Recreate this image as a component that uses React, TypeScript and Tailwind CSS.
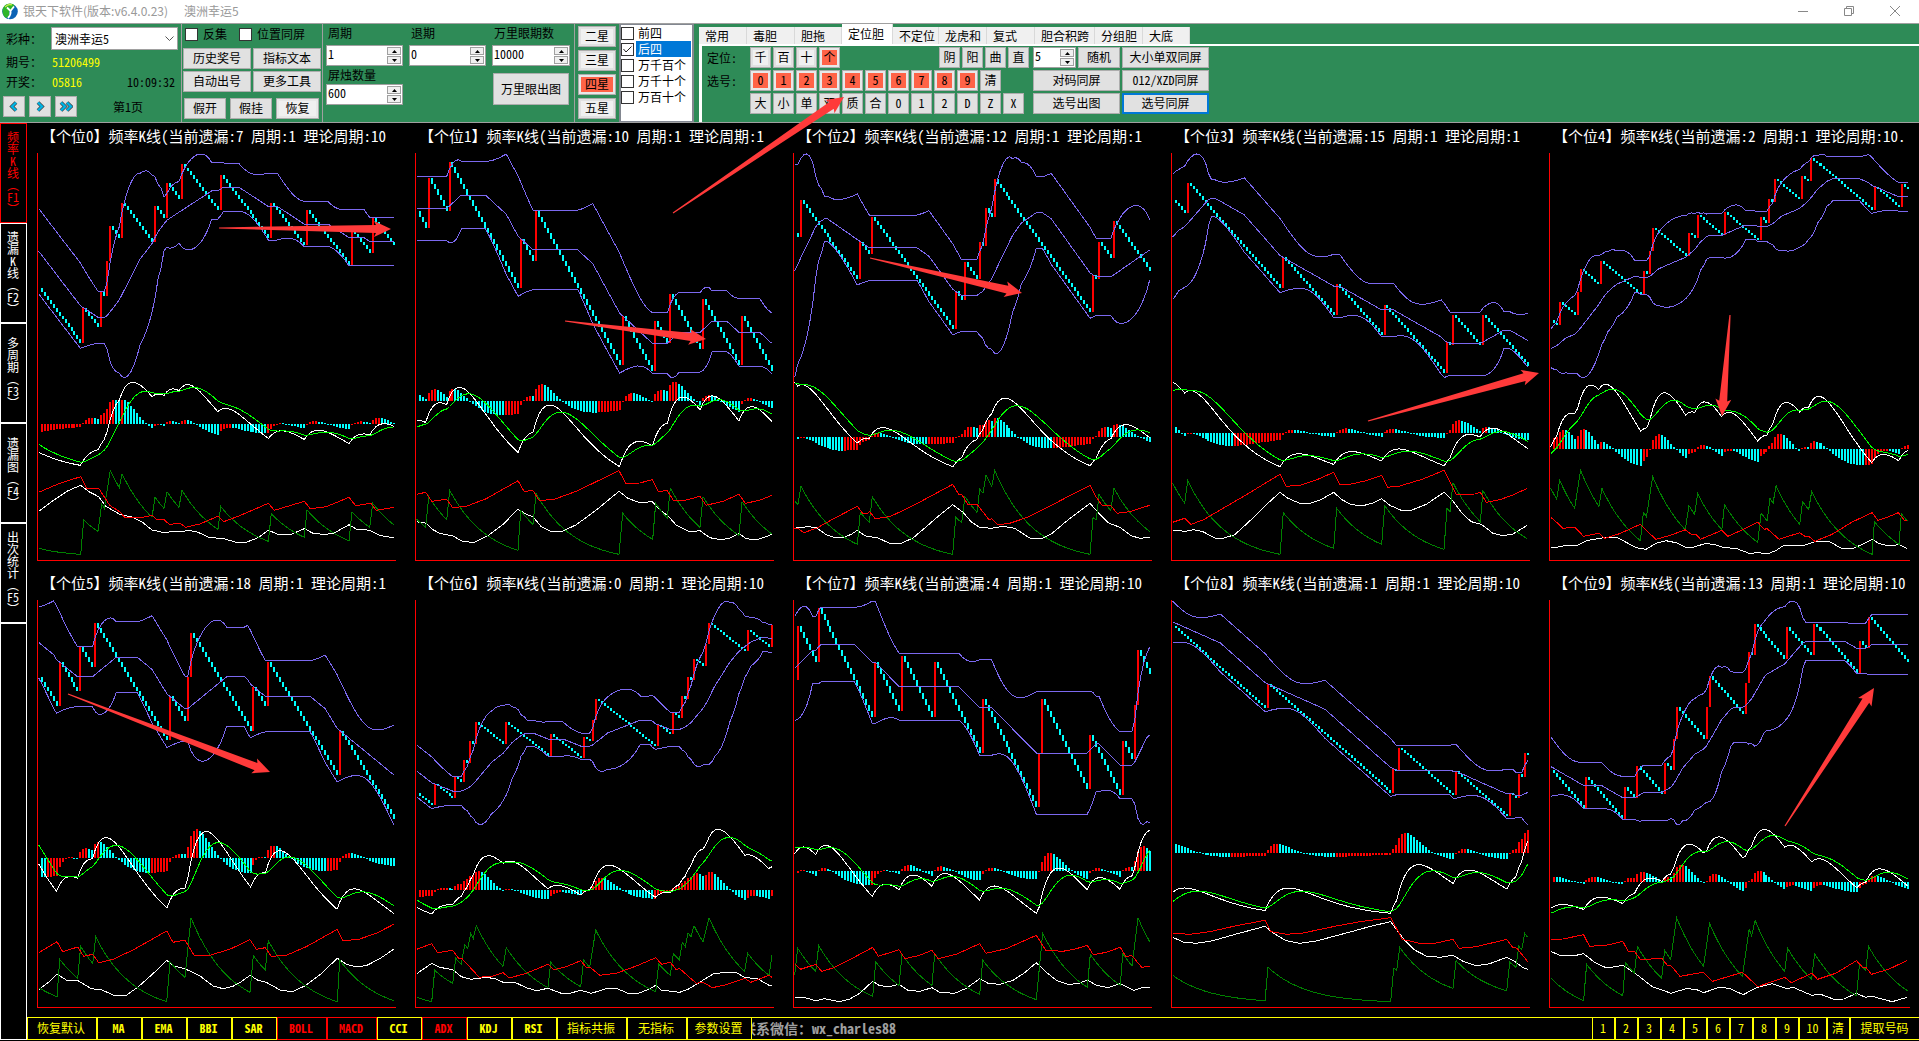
import React from "react";

/* ---------- chart data ---------- */

type Series = number[];

interface ChartSpec {
  title: string;
  /** candle indexes (0-118) of hits; negative ones lie before the visible window */
  hits: number[];
  /** MACD panel: zero line, first DIF, first DEA, anchor candle and its DIF height */
  macd: [number, number, number, number, number];
  /** horizontal and vertical origin of the trend lines below */
  origin: [number, number];
  plus: Series;
  minus: Series;
  adx: Series;
}

const CHARTS: ChartSpec[] = [
  {
    title: "【个位0】频率K线(当前遗漏:7 周期:1 理论周期:10",
    hits: [14, 20, 22, 23, 27, 38, 42, 47, 60, 77, 89, 104, 111],
    macd: [911, 997, 973, 31, 787],
    origin: [112, 99],
    plus: [117,1285,180,1297,243,1303,252,1200,295,1234,306,1153,314,1165,324,1100,332,1051,359,1103,367,1061,457,1192,466,1132,493,1165,502,1115,538,1162,547,1111,655,1228,663,1159,806,1264,815,1181,914,1252,922,1170,1048,1262,1057,1175,1110,1222,1119,1150,1182,1214],
    minus: [117,1117,180,1090,243,1070,261,1105,297,1105,330,1156,360,1175,375,1192,430,1192,457,1186,473,1200,493,1199,509,1213,542,1210,557,1222,600,1212,655,1189,672,1205,720,1187,806,1150,824,1171,914,1144,932,1166,980,1160,1048,1132,1068,1157,1113,1150,1130,1171,1182,1162],
    adx: [117,1174,160,1142,205,1112,243,1096,268,1115,297,1130,318,1159,360,1183,400,1192,430,1208,457,1230,495,1238,520,1234,545,1235,567,1231,595,1237,630,1253,668,1255,710,1267,740,1267,775,1253,806,1231,835,1243,875,1243,914,1226,940,1240,970,1243,1000,1241,1048,1214,1070,1227,1110,1231,1140,1246,1182,1254],
  },
  {
    title: "【个位1】频率K线(当前遗漏:10 周期:1 理论周期:1",
    hits: [-17, -5, 3, 10, 34, 39, 68, 79, 84, 95, 108],
    macd: [843, 901, 922, 67, 1040],
    origin: [16, 99],
    plus: [21,1197,48,1222,57,1130,111,1199,120,1111,325,1291,333,1172,370,1213,379,1120,628,1303,639,1180,729,1258,738,1150,773,1195,782,1105,871,1222,880,1130,988,1246,997,1145,1087,1242],
    minus: [21,1123,48,1117,66,1144,111,1138,129,1163,170,1159,230,1136,325,1082,343,1114,370,1112,388,1141,430,1139,500,1114,628,1052,648,1090,690,1089,728,1079,746,1114,773,1112,791,1141,830,1140,871,1129,889,1156,940,1144,988,1123,1007,1150,1050,1141,1087,1126],
    adx: [21,1205,50,1210,70,1229,90,1240,130,1248,160,1265,195,1267,235,1247,280,1213,325,1168,350,1183,370,1190,395,1220,425,1235,460,1233,500,1214,560,1170,628,1114,655,1135,690,1148,728,1145,750,1170,775,1187,800,1216,840,1235,871,1232,900,1253,935,1259,960,1255,988,1241,1010,1256,1040,1259,1065,1252,1087,1243],
  },
  {
    title: "【个位2】频率K线(当前遗漏:12 周期:1 理论周期:1",
    hits: [-19, -13, -12, -10, -9, 1, 21, 25, 53, 56, 61, 63, 66, 99, 101, 106],
    macd: [951, 787, 790, 52, 1040],
    origin: [40, 99],
    plus: [45,1144,55,1153,64,1099,233,1273,242,1177,269,1207,278,1130,519,1303,528,1192,546,1208,556,1130,592,1177,600,1108,610,1120,619,1065,636,1100,645,1051,931,1303,940,1193,950,1199,958,1123,993,1172,1003,1105,1110,1234],
    minus: [42,1225,55,1225,72,1238,110,1225,170,1192,233,1159,250,1181,264,1181,269,1174,287,1196,330,1190,400,1157,519,1093,537,1123,546,1123,564,1153,592,1153,628,1199,636,1196,654,1214,690,1210,740,1193,830,1148,931,1096,949,1130,967,1156,993,1156,1012,1180,1050,1175,1110,1156],
    adx: [42,1225,85,1220,110,1223,140,1244,165,1253,190,1253,215,1243,233,1231,255,1247,295,1254,330,1270,365,1270,400,1254,440,1220,480,1185,519,1154,550,1177,575,1206,600,1222,635,1225,670,1219,705,1225,750,1254,785,1256,815,1242,860,1204,931,1150,960,1183,985,1208,1020,1222,1055,1247,1080,1255,1110,1252],
  },
  {
    title: "【个位3】频率K线(当前遗漏:15 周期:1 理论周期:1",
    hits: [-18, -8, -7, -6, 4, 36, 54, 70, 91, 93, 103],
    macd: [939, 787, 813, 35, 1040],
    origin: [34, 99],
    plus: [39,1090,75,1150,84,1081,361,1303,371,1178,522,1285,531,1165,666,1273,675,1157,853,1288,862,1165,871,1175,880,1088,962,1205,970,1112,1103,1256],
    minus: [39,1207,75,1195,94,1213,130,1200,180,1171,250,1130,361,1063,379,1099,420,1096,470,1080,522,1057,540,1093,570,1093,620,1082,666,1066,684,1102,720,1098,790,1077,853,1051,890,1123,945,1122,962,1117,980,1147,1020,1139,1060,1125,1103,1105],
    adx: [39,1231,78,1234,103,1229,130,1235,165,1254,190,1255,225,1244,280,1194,320,1154,361,1117,385,1135,420,1150,450,1150,480,1141,522,1117,545,1138,575,1154,610,1157,640,1149,666,1136,690,1156,725,1171,755,1171,800,1153,853,1117,880,1144,910,1183,935,1205,965,1213,1000,1240,1030,1247,1060,1242,1103,1216],
  },
  {
    title: "【个位4】频率K线(当前遗漏:2 周期:1 理论周期:10.",
    hits: [-15, -3, -1, 2, 8, 9, 16, 30, 32, 33, 45, 48, 57, 69, 72, 74, 83, 86, 107, 116],
    macd: [987, 980, 1001, 88, 829],
    origin: [28, 99],
    plus: [33,1105,51,1138,60,1081,105,1165,123,1051,178,1160,187,1105,303,1262,312,1177,321,1190,340,1070,438,1229,449,1157,466,1183,475,1121,548,1229,556,1154,656,1267,666,1180,684,1202,693,1135,702,1150,711,1097,782,1213,791,1145,809,1169,818,1115,1000,1303,1007,1205,1081,1273,1088,1181,1106,1203],
    minus: [33,1192,51,1207,70,1225,105,1222,132,1249,178,1240,196,1255,240,1241,303,1213,349,1258,390,1247,438,1229,457,1244,470,1243,484,1258,548,1231,566,1249,600,1234,656,1207,675,1228,684,1226,720,1258,782,1238,800,1250,809,1249,828,1264,880,1243,940,1206,1000,1178,1017,1201,1050,1190,1079,1178,1097,1201,1106,1201],
    adx: [33,1282,55,1281,80,1276,110,1278,140,1262,200,1252,235,1253,262,1268,290,1283,320,1288,350,1270,380,1262,410,1268,440,1282,465,1281,500,1270,530,1275,555,1283,590,1285,630,1300,660,1298,685,1302,710,1292,735,1276,790,1278,825,1266,870,1264,910,1286,940,1287,970,1273,1000,1258,1020,1270,1045,1277,1082,1274,1106,1286],
  },
  {
    title: "【个位5】频率K线(当前遗漏:18 周期:1 理论周期:1",
    hits: [-15, 6, 13, 18, 43, 49, 50, 71, 76, 100],
    macd: [894, 912, 855, 118, 1060],
    origin: [112, 120],
    plus: [117,1283,172,1310,180,1198,234,1255,243,1159,279,1210,288,1130,501,1325,511,1205,556,1252,574,1073,751,1297,761,1187,797,1230,806,1142,1013,1325,1020,1200,1182,1322],
    minus: [117,1178,172,1145,189,1175,234,1161,252,1189,279,1183,297,1208,340,1198,400,1170,501,1113,520,1147,556,1140,583,1186,630,1186,690,1168,751,1139,770,1168,797,1163,815,1189,860,1186,920,1160,1013,1108,1030,1143,1080,1137,1130,1120,1182,1093],
    adx: [117,1289,145,1268,172,1243,200,1260,235,1262,275,1286,305,1289,345,1307,380,1306,415,1281,460,1241,501,1201,525,1219,555,1226,600,1247,640,1278,670,1286,700,1279,725,1265,751,1246,775,1261,800,1267,845,1292,880,1294,915,1278,960,1245,1013,1195,1040,1213,1070,1220,1100,1217,1140,1196,1182,1168],
  },
  {
    title: "【个位6】频率K线(当前遗漏:0 周期:1 理论周期:10",
    hits: [5, 12, 15, 17, 19, 29, 44, 55, 58, 59, 80, 85, 88, 90, 92, 96, 97, 110, 118],
    macd: [990, 1042, 1020, 100, 808],
    origin: [16, 120],
    plus: [21,1312,66,1325,75,1231,129,1270,138,1195,155,1213,165,1154,174,1165,183,1120,191,1135,200,1097,280,1219,290,1163,415,1283,423,1207,513,1280,522,1201,540,1222,558,1110,738,1295,747,1212,782,1246,791,1181,809,1200,818,1147,827,1160,835,1118,844,1130,853,1097,880,1145,898,1073,1005,1234,1014,1180,1078,1246,1087,1186],
    minus: [21,1168,66,1151,84,1178,129,1171,147,1195,156,1195,209,1252,250,1248,280,1238,299,1254,350,1240,415,1213,433,1229,470,1220,513,1202,531,1223,543,1223,570,1246,620,1240,680,1218,738,1193,756,1213,782,1207,800,1229,809,1225,860,1270,880,1267,908,1283,950,1274,1005,1255,1023,1267,1078,1246,1087,1252],
    adx: [21,1241,66,1210,90,1222,129,1229,155,1250,185,1258,230,1252,260,1257,280,1267,320,1269,350,1283,380,1292,415,1285,455,1300,480,1300,513,1291,545,1300,590,1286,625,1287,655,1300,685,1300,715,1289,738,1276,755,1290,810,1297,835,1288,870,1267,910,1242,945,1237,980,1238,1005,1252,1045,1257,1080,1277,1087,1277],
  },
  {
    title: "【个位7】频率K线(当前遗漏:4 周期:1 理论周期:10",
    hits: [-14, -11, 0, 7, 26, 35, 46, 62, 81, 82, 98, 109, 113, 114],
    macd: [933, 881, 861, 80, 1060],
    origin: [40, 120],
    plus: [45,1246,54,1165,108,1234,117,1157,279,1309,288,1205,358,1276,367,1183,457,1276,465,1181,600,1303,609,1200,770,1319,789,1120,923,1282,932,1183,1022,1276,1029,1181,1057,1217,1075,1073,1110,1145],
    minus: [45,1211,63,1228,108,1213,126,1234,160,1224,210,1199,279,1162,296,1189,358,1169,376,1196,420,1186,457,1171,475,1196,530,1183,600,1151,619,1180,680,1166,770,1126,798,1171,850,1174,890,1166,923,1156,941,1184,980,1177,1022,1162,1038,1189,1057,1187,1086,1222,1110,1219],
    adx: [45,1312,80,1314,108,1322,135,1316,180,1325,210,1317,240,1300,279,1264,300,1277,330,1280,358,1273,385,1291,420,1294,457,1283,480,1297,525,1300,560,1285,600,1256,625,1270,660,1273,700,1261,735,1238,770,1208,800,1237,830,1261,865,1273,895,1271,923,1260,950,1276,985,1283,1022,1271,1062,1291,1085,1284,1110,1282],
  },
  {
    title: "【个位8】频率K线(当前遗漏:1 周期:1 理论周期:10",
    hits: [-4, 31, 73, 75, 94, 112, 115, 117],
    macd: [879, 997, 1025, 72, 1060],
    origin: [34, 120],
    plus: [39,1246,316,1322,325,1222,693,1325,702,1225,711,1231,720,1162,880,1285,889,1202,1041,1292,1050,1207,1069,1222,1077,1159,1086,1169,1095,1120,1104,1132],
    minus: [39,1120,90,1123,150,1115,230,1097,316,1081,334,1115,380,1123,430,1119,530,1098,600,1085,693,1073,728,1138,780,1150,830,1149,880,1138,898,1165,950,1160,1041,1138,1059,1162,1072,1165,1104,1205],
    adx: [39,1132,70,1146,110,1150,160,1142,230,1122,316,1099,345,1122,380,1142,420,1150,470,1143,560,1119,640,1097,693,1085,730,1135,765,1170,800,1188,840,1192,880,1186,910,1204,950,1217,990,1211,1041,1192,1065,1204,1090,1223,1104,1228],
  },
  {
    title: "【个位9】频率K线(当前遗漏:13 周期:1 理论周期:10",
    hits: [-3, 11, 24, 28, 37, 40, 41, 51, 52, 64, 65, 67, 78, 87, 102, 105],
    macd: [966, 1045, 1060, 70, 808],
    origin: [28, 120],
    plus: [33,1254,132,1322,141,1213,250,1307,258,1207,285,1240,294,1159,367,1255,376,1171,394,1199,412,1073,493,1219,511,1090,610,1249,630,1108,638,1127,648,1081,737,1234,746,1165,818,1258,827,1181,953,1307,962,1212,981,1231,989,1159,1106,1292],
    minus: [33,1138,70,1137,132,1124,150,1159,200,1156,250,1144,267,1175,286,1175,304,1199,367,1195,385,1217,394,1216,422,1249,493,1237,520,1264,610,1237,656,1280,737,1252,757,1268,818,1240,836,1258,890,1240,953,1202,972,1223,981,1222,998,1243,1050,1228,1106,1201],
    adx: [33,1174,60,1186,100,1188,132,1181,165,1207,195,1221,220,1221,250,1216,295,1246,340,1281,370,1291,395,1300,440,1286,470,1288,493,1298,540,1282,570,1285,612,1304,655,1282,700,1271,740,1285,765,1283,818,1306,845,1303,885,1318,915,1317,953,1300,980,1312,1000,1309,1060,1325,1106,1312],
  },
];

const COUNT = 119;
const PAST = 20;
const PLOT_W = 359;
const PLOT_H = 408;

const candleX = (k: number) => (14 + 8.95 * k) / 3;

function buildChart(spec: ChartSpec, wide: boolean) {
  const hit = new Set(spec.hits);
  const step = (k: number) => (hit.has(k) ? 9 : -1);
  const close: Record<number, number> = { [-1]: 0 };
  for (let k = -1; k > -PAST; k--) close[k - 1] = close[k] - step(k);
  for (let k = 0; k < COUNT; k++) close[k] = close[k - 1] + step(k);

  // Bollinger bands, 20 candles wide
  const mid: number[] = [];
  const dev: number[] = [];
  for (let k = -1; k < COUNT; k++) {
    let sum = 0;
    for (let j = 0; j < 20; j++) sum += close[k - j];
    const mean = sum / 20;
    let sq = 0;
    for (let j = 0; j < 20; j++) sq += (close[k - j] - mean) ** 2;
    mid.push(mean);
    dev.push(1.9 * Math.sqrt(sq / 20));
  }
  const top = Math.max(...mid.map((m, i) => m + dev[i]));
  const low = Math.min(...mid.map((m, i) => m - dev[i]));
  const priceY = (v: number) => 1 + ((top - v) / (top - low)) * 223.5;
  const band = (sign: number) =>
    mid.map((m, i) => `${candleX(i - 1).toFixed(1)},${priceY(m + sign * dev[i]).toFixed(1)}`).join(" ");

  const candles = [];
  for (let k = 0; k < COUNT; k++) {
    const up = hit.has(k);
    const y1 = Math.round(priceY(Math.max(close[k], close[k - 1])));
    const y2 = Math.round(priceY(Math.min(close[k], close[k - 1])));
    candles.push({ x: Math.round(candleX(k)) - 1, y: y1, h: Math.max(2, y2 - y1), up });
  }

  // MACD(12, 26, 9)
  const [base, dif0, dea0, anchor, anchorY] = spec.macd;
  let fast = close[-PAST];
  for (let k = -PAST + 1; k < 0; k++) fast += (close[k] - fast) * (2 / 13);
  let scale = 25;
  let dif: number[] = [];
  let dea: number[] = [];
  for (let round = 0; round < 12; round++) {
    let e12 = fast;
    let e26 = fast - (base - dif0) / scale;
    let signal = (base - dea0) / scale;
    dif = [e12 - e26];
    dea = [signal];
    for (let k = 0; k < COUNT; k++) {
      e12 += (close[k] - e12) * (2 / 13);
      e26 += (close[k] - e26) * (2 / 27);
      signal += (e12 - e26 - signal) * 0.2;
      dif.push(e12 - e26);
      dea.push(signal);
    }
    scale = (base - anchorY) / dif[anchor + 1];
  }
  const macdY = (v: number) => (base - spec.origin[1] - v * scale) / 3;
  const zero = Math.round(macdY(0));
  const line = (vals: number[]) =>
    vals.map((v, i) => `${candleX(i - 1).toFixed(1)},${macdY(v).toFixed(1)}`).join(" ");
  const bars = [];
  for (let k = 0; k < COUNT; k++) {
    const v = dif[k + 1] - dea[k + 1];
    const before = dif[k] - dea[k];
    const h = Math.max(1, Math.round((Math.abs(v) * scale) / 3));
    bars.push({ x: Math.round(candleX(k)) - 1, y: v > 0 ? zero - h : zero, h, up: v > before });
  }

  // directional movement lines
  const stretch = wide ? 359 / 362 : 1;
  const local = (x: number, y: number) =>
    `${(((x - spec.origin[0]) / 3) * stretch).toFixed(1)},${((y - spec.origin[1]) / 3).toFixed(1)}`;
  const path = (pts: Series, decay: boolean) => {
    const out: string[] = [];
    for (let i = 0; i < pts.length; i += 2) {
      const [x, y, nx, ny] = [pts[i], pts[i + 1], pts[i + 2], pts[i + 3]];
      out.push(local(x, y));
      if (decay && ny > y && nx - x > 20) {
        const n = Math.round((nx - x) / 9);
        const b = (y - ny) / (1 - 0.926 ** n);
        for (let t = 1; t < n; t++) out.push(local(x + ((nx - x) * t) / n, y + b * (0.926 ** t - 1)));
      }
    }
    return out.join(" ");
  };

  return {
    bands: [band(1), band(0), band(-1)],
    candles,
    bars,
    dif: line(dif),
    dea: line(dea),
    plus: path(spec.plus, true),
    minus: path(spec.minus, false),
    adx: path(spec.adx, false),
  };
}

const BUILT = CHARTS.map((c, i) => ({ title: c.title, ...buildChart(c, i % 5 === 4) }));

function Chart({ data }: { data: (typeof BUILT)[number] }) {
  return (
    <section className="flex min-h-0 min-w-0 flex-col pb-[9px] pl-[10px]">
      <h2 className="h-[30px] shrink-0 pt-px pl-[4px] text-[15px] leading-[24px] font-normal whitespace-pre text-white">
        {data.title}
      </h2>
      <div className="flex min-h-0 flex-1 pr-[9px]">
        <svg
          className="block h-full w-full min-w-0"
          viewBox={`0 0 ${PLOT_W} ${PLOT_H}`}
          preserveAspectRatio="none"
          shapeRendering="crispEdges"
          fill="none"
          role="img"
          aria-label={data.title}
        >
          {data.candles.map((c, i) => (
            <rect key={i} x={c.x} y={c.y} width={2} height={c.h} fill={c.up ? "#ff0000" : "#00ffff"} />
          ))}
          {data.bands.map((b, i) => (
            <polyline key={i} points={b} stroke="#7b68ee" />
          ))}
          {data.bars.map((c, i) => (
            <rect key={i} x={c.x} y={c.y} width={2} height={c.h} fill={c.up ? "#ff0000" : "#00ffff"} />
          ))}
          <polyline points={data.dif} stroke="#ffffff" />
          <polyline points={data.dea} stroke="#00ff00" />
          <polyline points={data.adx} stroke="#ffffff" />
          <polyline points={data.plus} stroke="#008000" />
          <polyline points={data.minus} stroke="#ff0000" />
          <path d={`M0.5 0V${PLOT_H - 0.5}H${PLOT_W}`} stroke="#ff0000" />
        </svg>
      </div>
    </section>
  );
}

/* ---------- small controls ---------- */

function Btn({ children, className = "", label }: { children: React.ReactNode; className?: string; label?: string }) {
  return (
    <button
      type="button"
      aria-label={label}
      className={`flex h-[21px] items-center justify-center border border-[#adadad] bg-[#e1e1e1] pb-px leading-none whitespace-nowrap text-black ${className}`}
    >
      {children}
    </button>
  );
}

function Key({ children, on = false, light = false }: { children: string; on?: boolean; light?: boolean }) {
  const tone = on
    ? "bg-[#ff6347] shadow-[inset_0_0_0_2px_#e8e8e8]"
    : light
      ? "bg-[#f0f0f0] shadow-[inset_0_0_0_2px_#e1e1e1]"
      : "bg-[#e1e1e1]";
  return (
    <button
      type="button"
      className={`flex h-[21px] w-[21px] items-center justify-center border border-[#adadad] pb-px leading-none text-black ${tone}`}
    >
      {children}
    </button>
  );
}

function Spin({ id, value, label, className = "" }: { id: string; value: string; label: string; className?: string }) {
  return (
    <div className={`flex h-[21px] border border-[#a0a0a0] bg-white ${className}`}>
      <input
        id={id}
        aria-label={label}
        defaultValue={value}
        className="min-w-0 flex-1 bg-white px-px pb-[4px] leading-none text-black outline-none"
      />
      <div className="flex w-[16px] flex-col gap-px p-px">
        <button type="button" aria-label={`${label}+`} className="flex flex-1 items-center justify-center border border-[#a0a0a0] bg-[#f0f0f0]">
          <svg width="5" height="3" viewBox="0 0 5 3"><path d="M0 3L2.500 0L5 3Z" /></svg>
        </button>
        <button type="button" aria-label={`${label}-`} className="flex flex-1 items-center justify-center border border-[#a0a0a0] bg-[#f0f0f0]">
          <svg width="5" height="3" viewBox="0 0 5 3"><path d="M0 0L2.500 3L5 0Z" /></svg>
        </button>
      </div>
    </div>
  );
}

const CHECK =
  "h-[13px] w-[13px] shrink-0 appearance-none border border-[#333] bg-white";

function Chevrons({ d }: { d: string }) {
  return (
    <svg width="14" height="11" viewBox="0 0 14 11" fill="none" stroke="#444" strokeWidth="3.800">
      <path d={d} />
      <path d={d} stroke="#00b4e6" strokeWidth="2.400" />
    </svg>
  );
}

/* ---------- header ---------- */

function TitleBar() {
  return (
    <div className="flex h-[23px] items-center bg-white pb-px text-[12px] text-[#999]">
      <svg className="ml-[2px]" width="16" height="17" viewBox="0 0 16 17">
        <circle cx="8" cy="8.500" r="7.800" fill="#0b62b5" />
        <path d="M2 3.500C5-.5 11 0 12.500 2.500C11 6 9 8 7 8C8 11 7 14 4 15C-.5 12 0 6 2 3.500Z" fill="#2fb52a" />
        <path d="M5 4.500L8.500 8L12 3.500M8.500 8C9 11 8 13 6 15" fill="none" stroke="#fff" strokeWidth="1.800" />
        <path d="M3 4C5 2 8 1 10 2" fill="none" stroke="#c8ee4a" strokeWidth="1.300" />
      </svg>
      <h1 className="ml-[5px] flex gap-[16px] font-['Noto_Sans_CJK_SC',sans-serif] font-normal whitespace-nowrap">
        <span>银天下软件(版本:v6.4.0.23)</span>
        <span>澳洲幸运5</span>
      </h1>
      <div className="ml-auto flex pr-px">
        <button type="button" aria-label="最小化" className="flex h-[20px] w-[46px] items-center justify-center">
          <svg width="10" height="10" viewBox="0 0 10 10" stroke="#888"><path d="M0 5.500H10" /></svg>
        </button>
        <button type="button" aria-label="还原" className="flex h-[20px] w-[46px] items-center justify-center">
          <svg width="10" height="10" viewBox="0 0 10 10" fill="none" stroke="#888"><path d="M.5 2.500H7.500V9.500H.5ZM2.500 2.500V.5H9.500V7.500H7.500" /></svg>
        </button>
        <button type="button" aria-label="关闭" className="flex h-[20px] w-[46px] items-center justify-center">
          <svg width="10" height="10" viewBox="0 0 10 10" stroke="#888"><path d="M0 0L10 10M10 0L0 10" /></svg>
        </button>
      </div>
    </div>
  );
}

function DrawInfo() {
  return (
    <div className="flex w-[182px] shrink-0 flex-col border-r border-[#a0a0a0] pl-[3px]">
      <div className="flex pt-[3px] pl-[3px]">
        <label htmlFor="lottery" className="w-[45px] leading-[23px]">彩种：</label>
        <div className="relative">
          <select id="lottery" className="h-[23px] w-[127px] appearance-none border border-[#a0a0a0] bg-white pl-[3px] text-black">
            <option>澳洲幸运5</option>
          </select>
          <svg className="pointer-events-none absolute top-[9px] right-[4px]" width="9" height="6" viewBox="0 0 9 6" fill="none" stroke="#555"><path d="M.5.5L4.500 4.500L8.500.5" /></svg>
        </div>
      </div>
      <div className="mt-[2px] flex h-[20px] items-center pl-[3px]">
        <span className="w-[46px]">期号：</span>
        <span className="text-[#ffff00]">51206499</span>
      </div>
      <div className="flex h-[19px] items-center pl-[3px]">
        <span className="w-[46px]">开奖：</span>
        <span className="text-[#ffff00]">05816</span>
        <span className="ml-auto pr-[6px]">10:09:32</span>
      </div>
      <div className="mt-[5px] flex items-center gap-[4px]">
        <Btn className="w-[22px]" label="上一页"><Chevrons d="M9 1.500L5 5.500L9 9.500" /></Btn>
        <Btn className="w-[22px]" label="下一页"><Chevrons d="M5 1.500L9 5.500L5 9.500" /></Btn>
        <Btn className="w-[22px]" label="末页"><Chevrons d="M2 1.500L6 5.500L2 9.500M8 1.500L12 5.500L8 9.500" /></Btn>
        <span className="ml-[32px]">第1页</span>
      </div>
    </div>
  );
}

function Tools() {
  return (
    <div className="flex w-[141px] shrink-0 flex-col border-r border-[#a0a0a0] pt-[2px] pl-px">
      <div className="flex h-[16px] items-center pl-[2px]">
        <label className="flex w-[54px] items-center gap-[5px]"><input type="checkbox" className={CHECK} />反集</label>
        <label className="flex items-center gap-[5px]"><input type="checkbox" className={CHECK} />位置同屏</label>
      </div>
      <div className="mt-[6px] grid grid-cols-[68px_68px] gap-[2px]">
        <Btn>历史奖号</Btn>
        <Btn>指标文本</Btn>
        <Btn>自动出号</Btn>
        <Btn>更多工具</Btn>
      </div>
      <div className="mt-[6px] flex gap-[4px] pl-px">
        <Btn className="w-[42px]">假开</Btn>
        <Btn className="w-[42px]">假挂</Btn>
        <Btn className="w-[43px] bg-[#f0f0f0] shadow-[inset_0_0_0_2px_#e8e8e8]">恢复</Btn>
      </div>
    </div>
  );
}

function Periods() {
  return (
    <div className="w-[252px] shrink-0 border-r border-[#a0a0a0] pl-[3px]">
      <div className="grid grid-cols-[77px_77px_78px] gap-x-[6px]">
        <label htmlFor="p1" className="pl-[2px] leading-[18px]">周期</label>
        <label htmlFor="p2" className="pl-[2px] leading-[18px]">退期</label>
        <label htmlFor="p3" className="pl-[2px] leading-[18px]">万里眼期数</label>
        <Spin id="p1" value="1" label="周期" className="mt-[3px]" />
        <Spin id="p2" value="0" label="退期" className="mt-[3px]" />
        <Spin id="p3" value="10000" label="万里眼期数" className="mt-[3px]" />
      </div>
      <div className="flex">
        <div className="w-[167px]">
          <label htmlFor="p4" className="block pl-[2px] leading-[18px]">屏烛数量</label>
          <Spin id="p4" value="600" label="屏烛数量" className="w-[77px]" />
        </div>
        <Btn className="mt-[7px] h-[32px] w-[76px]">万里眼出图</Btn>
      </div>
    </div>
  );
}

const STARS = ["二星", "三星", "四星", "五星"];
const GROUPS = ["前四", "后四", "万千百个", "万千十个", "万百十个"];
const TABS: [string, string][] = [
  ["常用", "w-[48px]"],
  ["毒胆", "w-[48px]"],
  ["胆拖", "w-[47px]"],
  ["定位胆", "w-[51px]"],
  ["不定位", "w-[46px]"],
  ["龙虎和", "w-[48px]"],
  ["复式", "w-[48px]"],
  ["胆合积跨", "w-[60px]"],
  ["分组胆", "w-[48px]"],
  ["大底", "w-[47px]"],
];

function Groups() {
  return (
    <>
      <div className="flex shrink-0 flex-col gap-[3px] px-[3px] pt-[2px]">
        {STARS.map((s, i) => (
          <button
            key={s}
            type="button"
            className={`h-[21px] w-[38px] border border-[#adadad] pb-px leading-none text-black ${
              i === 2 ? "bg-[#ff6347] shadow-[inset_0_0_0_2px_#e8e8e8]" : "bg-[#f0f0f0] shadow-[inset_0_0_0_2px_#e1e1e1]"
            }`}
          >
            {s}
          </button>
        ))}
      </div>
      <div className="w-[75px] shrink-0 border-x-2 border-y border-[#828790] bg-white pr-px">
        {GROUPS.map((g, i) => (
          <label key={g} className="flex h-[16px] items-center gap-[2px]">
            <span className="relative flex">
              <input type="checkbox" defaultChecked={i === 1} className={CHECK} />
              {i === 1 && (
                <svg className="pointer-events-none absolute top-[3px] left-[2px]" width="9" height="7" viewBox="0 0 9 7" fill="none" stroke="#222"><path d="M.5 3L3 6L8.500.5" /></svg>
              )}
            </span>
            <span className={`flex-1 pl-[2px] leading-[16px] whitespace-nowrap ${i === 1 ? "bg-[#0078d7] text-white" : "text-black"}`}>{g}</span>
          </label>
        ))}
      </div>
    </>
  );
}

function Picker() {
  return (
    <div className="flex min-w-0 flex-1 flex-col pl-[5px]">
      <div role="tablist" className="flex h-[20px] items-end">
        {TABS.map(([t, w], i) => (
          <button
            key={t}
            type="button"
            role="tab"
            aria-selected={i === 3}
            className={`flex shrink-0 items-center border-r border-[#d9d9d9] pl-[6px] whitespace-nowrap text-black ${w} ${
              i === 3 ? "h-[20px] bg-white pb-px" : "h-[17px] bg-[#f0f0f0]"
            }`}
          >
            {t}
          </button>
        ))}
      </div>
      <div className="flex flex-1 border-t-2 border-l-3 border-white pl-[5px]">
        <div className="flex w-[326px] flex-col gap-[2px] pt-px">
          <div className="flex items-center gap-[2px] pr-[4px]">
            <span className="w-[41px]">定位:</span>
            {["千", "百", "十"].map((t) => <Key key={t} light>{t}</Key>)}
            <Key on>个</Key>
            <span className="flex-1" />
            {["阴", "阳", "曲", "直"].map((t) => <Key key={t}>{t}</Key>)}
          </div>
          <div className="flex items-center gap-[2px]">
            <span className="w-[41px]">选号:</span>
            {"0123456789".split("").map((t) => <Key key={t} on>{t}</Key>)}
            <Key>清</Key>
          </div>
          <div className="flex gap-[2px] pl-[43px]">
            {["大", "小", "单", "双", "质", "合", "0", "1", "2", "D", "Z", "X"].map((t) => <Key key={t}>{t}</Key>)}
          </div>
        </div>
        <div className="grid grid-cols-[87px_87px] content-start gap-[2px] pt-px">
          <div className="flex gap-[2px]">
            <Spin id="rand" value="5" label="随机数" className="w-[43px]" />
            <Btn className="flex-1">随机</Btn>
          </div>
          <Btn>大小单双同屏</Btn>
          <Btn>对码同屏</Btn>
          <Btn>012/XZD同屏</Btn>
          <Btn>选号出图</Btn>
          <button type="button" className="flex h-[21px] items-center justify-center border-2 border-[#0078d7] bg-[#e1e1e1] pb-px leading-none text-black">选号同屏</button>
        </div>
      </div>
    </div>
  );
}

/* ---------- side tabs and bottom bar ---------- */

const SIDE = [
  ["频", "率", "K", "线", "︵", "F1", "︶"],
  ["遗", "漏", "K", "线", "︵", "F2", "︶"],
  ["多", "周", "期", "︵", "F3", "︶"],
  ["遗", "漏", "图", "︵", "F4", "︶"],
  ["出", "次", "统", "计", "︵", "F5", "︶"],
];

function SideTabs() {
  return (
    <nav className="flex w-[27px] shrink-0 flex-col border-b border-white">
      {SIDE.map((chars, i) => (
        <button
          key={i}
          type="button"
          className={`flex h-[100px] w-full flex-col items-center justify-center border pr-px text-[12px] leading-[12px] ${
            i === 0 ? "border-[#ff0000] text-[#ff0000]" : "border-white text-white"
          }`}
        >
          {chars.map((c, j) => <span key={j} className="block h-[12px]">{c}</span>)}
        </button>
      ))}
      <div className="flex-1 border border-b-0 border-white" />
    </nav>
  );
}

const INDICATORS: [string, string, boolean][] = [
  ["恢复默认", "w-[70px]", false],
  ["MA", "w-[45px] font-bold", false],
  ["EMA", "w-[45px] font-bold", false],
  ["BBI", "w-[45px] font-bold", false],
  ["SAR", "w-[45px] font-bold", false],
  ["BOLL", "w-[50px] font-bold", true],
  ["MACD", "w-[50px] font-bold", true],
  ["CCI", "w-[45px] font-bold", false],
  ["ADX", "w-[45px] font-bold", true],
  ["KDJ", "w-[45px] font-bold", false],
  ["RSI", "w-[45px] font-bold", false],
  ["指标共振", "w-[70px]", false],
  ["无指标", "w-[60px]", false],
  ["参数设置", "w-[65px]", false],
];

function BottomBar() {
  return (
    <footer className="flex h-[23px] shrink-0 text-[12px] text-[#ffff00]">
      {INDICATORS.map(([t, w, on]) => (
        <button
          key={t}
          type="button"
          className={`flex shrink-0 items-center justify-center border pr-[2px] pb-[2px] whitespace-nowrap ${w} ${on ? "border-[#ff0000] text-[#ff0000]" : "border-[#ffff00]"}`}
        >
          {t}
        </button>
      ))}
      <div className="flex min-w-0 flex-1 items-center overflow-hidden border-y border-[#ffff00]">
        <span className="-ml-[10px] pb-[2px] text-[14px] leading-none font-bold whitespace-nowrap text-[#a0a0a0]">联系微信：wx_charles88</span>
      </div>
      {["1", "2", "3", "4", "5", "6", "7", "8", "9"].map((n) => (
        <button key={n} type="button" className="flex w-[23px] shrink-0 items-center justify-center border border-[#ffff00] pr-px pb-[2px]">{n}</button>
      ))}
      <button type="button" className="flex w-[28px] shrink-0 items-center justify-center border border-[#ffff00] pr-px pb-[2px]">10</button>
      <button type="button" className="flex w-[23px] shrink-0 items-center justify-center border border-[#ffff00] pr-px pb-[2px]">清</button>
      <button type="button" className="flex w-[69px] shrink-0 items-center justify-center border border-r-0 border-[#ffff00] pr-px pb-[2px]">提取号码</button>
    </footer>
  );
}

/* ---------- arrows drawn over the page ---------- */

const ARROWS: [number, number, number, number][] = [
  [219, 228, 391, 229],
  [673, 213, 844, 97],
  [565, 321, 706, 339],
  [870, 258, 1022, 293],
  [1368, 421, 1539, 373],
  [1730, 315, 1722, 416],
  [68, 694, 270, 772],
  [1785, 826, 1874, 688],
];

function arrowPoints([x1, y1, x2, y2]: [number, number, number, number]) {
  const len = Math.hypot(x2 - x1, y2 - y1);
  const ux = (x2 - x1) / len;
  const uy = (y2 - y1) / len;
  const at = (d: number, side: number) =>
    `${(x1 + ux * d - uy * side).toFixed(1)},${(y1 + uy * d + ux * side).toFixed(1)}`;
  return [at(0, -0.6), at(len - 15, -4), at(len - 17, -8), at(len, 0), at(len - 17, 8), at(len - 15, 4), at(0, 0.6)].join(" ");
}

export default function App() {
  return (
    <div className="relative flex h-screen min-h-[700px] flex-col overflow-hidden bg-black pb-px font-['Noto_Sans_Mono_CJK_SC','Noto_Sans_CJK_SC',monospace] text-[12px]">
      <TitleBar />
      <header className="flex h-[100px] shrink-0 border-y border-[#a0a0a0] bg-[#2e8b57] text-black">
        <DrawInfo />
        <Tools />
        <Periods />
        <Groups />
        <Picker />
      </header>
      <div className="flex min-h-0 flex-1">
        <SideTabs />
        <div className="flex min-w-0 flex-1 flex-col">
          <main className="grid min-h-0 flex-1 grid-cols-[378fr_378fr_378fr_378fr_380fr] grid-rows-2">
            {BUILT.map((c) => <Chart key={c.title} data={c} />)}
          </main>
          <BottomBar />
        </div>
      </div>
      <svg className="pointer-events-none absolute inset-0 h-full w-full" viewBox="0 0 1919 1041" preserveAspectRatio="none">
        {ARROWS.map((a, i) => <polygon key={i} points={arrowPoints(a)} fill="#ff3a3a" />)}
      </svg>
    </div>
  );
}
